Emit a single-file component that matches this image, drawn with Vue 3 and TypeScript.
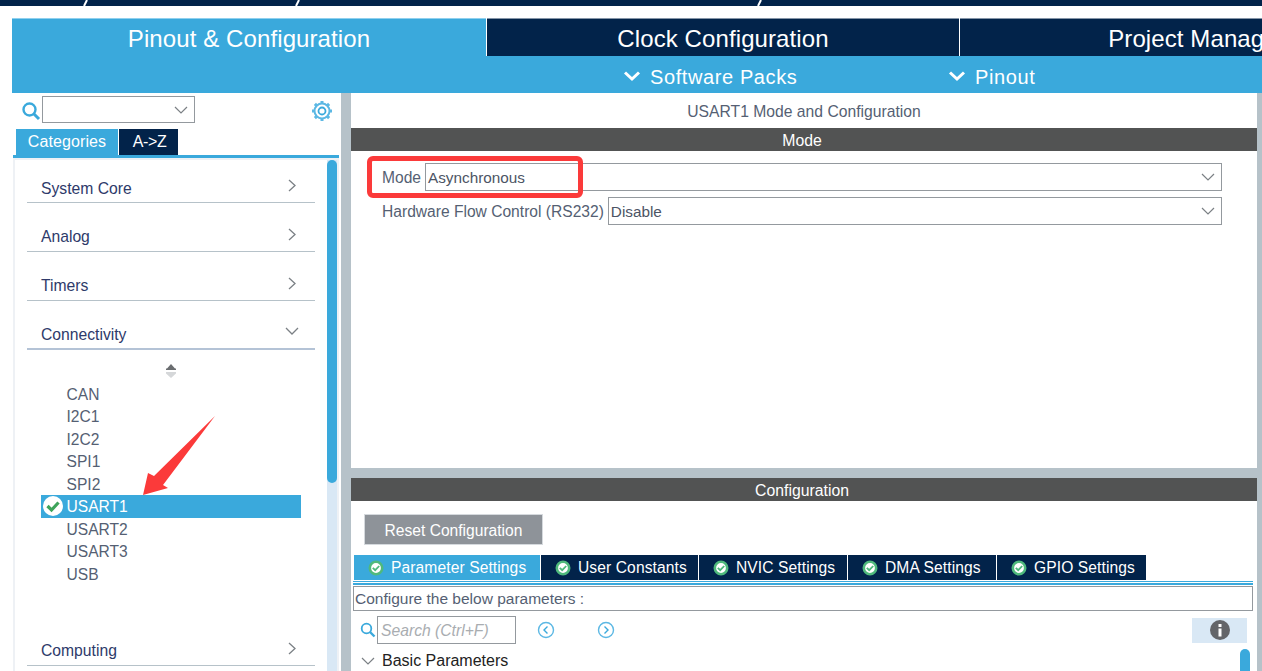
<template>
  <div class="app">
    <div class="strip">
      <svg width="1262" height="6" viewBox="0 0 1262 6">
        <path v-for="x in stripMarks" :key="x" :d="`M${x} 6L${x + 3} 0`" stroke="#fff" stroke-width="2" fill="none" />
      </svg>
    </div>

    <div class="main-tabs">
      <div v-for="(tab, i) in mainTabs" :key="tab" class="main-tab" :class="{ active: i === 0 }">{{ tab }}</div>
    </div>
    <div class="sub-menu">
      <div v-for="item in subMenu" :key="item" class="sub-item">
        <svg width="18" height="12" viewBox="0 0 18 12"><path d="M2 2.5L9 9L16 2.5" fill="none" stroke="#fff" stroke-width="3" /></svg>
        <span>{{ item }}</span>
      </div>
    </div>

    <div class="workspace">
      <aside class="left">
        <div class="search-row">
          <svg class="search-icon" width="20" height="20" viewBox="0 0 20 20">
            <circle cx="8.5" cy="8.5" r="6" fill="none" stroke="#3aa9dc" stroke-width="2.4" />
            <path d="M13 13L18 18" stroke="#3aa9dc" stroke-width="3" />
          </svg>
          <div class="combo">
            <svg width="14" height="8" viewBox="0 0 14 8"><path d="M1 1L7 7L13 1" fill="none" stroke="#7b8085" stroke-width="1.2" /></svg>
          </div>
          <svg class="gear" width="22" height="22" viewBox="0 0 22 22">
            <circle cx="11" cy="11" r="7.5" fill="none" stroke="#5cb8e4" stroke-width="2" />
            <circle cx="11" cy="11" r="3.5" fill="none" stroke="#3aa9dc" stroke-width="1.8" />
            <path
              d="M11 1V4M11 18V21M1 11H4M18 11H21M3.9 3.9L6 6M16 16L18.1 18.1M3.9 18.1L6 16M16 6L18.1 3.9"
              stroke="#5cb8e4"
              stroke-width="3"
            />
          </svg>
        </div>
        <div class="left-tabs">
          <div class="left-tab active">Categories</div>
          <div class="left-tab">A-&gt;Z</div>
        </div>
        <div class="list-panel">
          <div class="list">
            <div v-for="cat in categoriesTop" :key="cat.name" class="category">
              <span>{{ cat.name }}</span>
              <svg v-if="cat.open" class="cat-arrow open" width="14" height="9" viewBox="0 0 14 9"><path d="M1 1L7 7L13 1" fill="none" stroke="#7b8085" stroke-width="1.3" /></svg>
              <svg v-else class="cat-arrow" width="8" height="13" viewBox="0 0 8 13"><path d="M1 1L7 6.5L1 12" fill="none" stroke="#7b8085" stroke-width="1.3" /></svg>
            </div>
            <div class="sort-icon">
              <svg width="12" height="16" viewBox="0 0 12 16">
                <path d="M6 1L10 5.5H11V7H1V5.5H2Z" fill="#6a6d70" />
                <path d="M1 9H11V10.5L6 15L1 10.5Z" fill="#d5d7d9" />
              </svg>
            </div>
            <div class="peripherals">
              <div v-for="p in peripherals" :key="p" class="peripheral" :class="{ selected: p === selected }">
                <svg v-if="p === selected" class="ok-big" width="22" height="22" viewBox="0 0 22 22">
                  <circle cx="11" cy="11" r="10" fill="#fff" />
                  <path d="M5.5 11L9.5 15L16.5 7.5" fill="none" stroke="#3fa45b" stroke-width="3.2" />
                </svg>
                <span>{{ p }}</span>
              </div>
            </div>
            <div class="category computing">
              <span>Computing</span>
              <svg class="cat-arrow" width="8" height="13" viewBox="0 0 8 13"><path d="M1 1L7 6.5L1 12" fill="none" stroke="#7b8085" stroke-width="1.3" /></svg>
            </div>
          </div>
          <div class="list-scroll"><div class="list-thumb"></div></div>
        </div>
      </aside>

      <section class="right">
        <div class="mode-pane">
          <div class="pane-title">USART1 Mode and Configuration</div>
          <div class="band">Mode</div>
          <div class="form">
            <div class="form-row">
              <label>Mode</label>
              <div class="select">
                <span>Asynchronous</span>
                <svg width="14" height="8" viewBox="0 0 14 8"><path d="M1 1L7 7L13 1" fill="none" stroke="#7b8085" stroke-width="1.2" /></svg>
              </div>
            </div>
            <div class="form-row">
              <label>Hardware Flow Control (RS232)</label>
              <div class="select">
                <span>Disable</span>
                <svg width="14" height="8" viewBox="0 0 14 8"><path d="M1 1L7 7L13 1" fill="none" stroke="#7b8085" stroke-width="1.2" /></svg>
              </div>
            </div>
          </div>
        </div>
        <div class="divider"></div>
        <div class="config-pane">
          <div class="band">Configuration</div>
          <button class="reset">Reset Configuration</button>
          <div class="config-tabs">
            <div
              v-for="(tab, i) in configTabs"
              :key="tab.label"
              class="config-tab"
              :class="{ active: i === 0 }"
              :style="{ width: tab.width + 'px' }"
            >
              <svg width="16" height="16" viewBox="0 0 16 16">
                <circle cx="8" cy="8" r="6.2" fill="#fff" stroke="#4fb97c" stroke-width="2.6" />
                <path d="M4.8 7.8L7.2 10.2L11.2 6" fill="none" stroke="#4fb97c" stroke-width="1.8" />
              </svg>
              <span>{{ tab.label }}</span>
            </div>
          </div>
          <div class="tabs-rule"></div>
          <div class="describe">Configure the below parameters :</div>
          <div class="param-tools">
            <svg width="16" height="16" viewBox="0 0 16 16">
              <circle cx="6.5" cy="6.5" r="4.8" fill="none" stroke="#3aa9dc" stroke-width="1.8" />
              <path d="M10 10L14.5 14.5" stroke="#3aa9dc" stroke-width="2.4" />
            </svg>
            <div class="param-search">Search (Ctrl+F)</div>
            <svg class="nav first" width="18" height="18" viewBox="0 0 18 18">
              <circle cx="9" cy="9" r="7.5" fill="none" stroke="#5cb8e4" stroke-width="1.4" />
              <path d="M10.5 5.5L7 9L10.5 12.5" fill="none" stroke="#3aa9dc" stroke-width="1.4" />
            </svg>
            <svg class="nav" width="18" height="18" viewBox="0 0 18 18">
              <circle cx="9" cy="9" r="7.5" fill="none" stroke="#5cb8e4" stroke-width="1.4" />
              <path d="M7.5 5.5L11 9L7.5 12.5" fill="none" stroke="#3aa9dc" stroke-width="1.4" />
            </svg>
            <div class="info">
              <svg width="20" height="20" viewBox="0 0 20 20">
                <circle cx="10" cy="10" r="10" fill="#636569" />
                <rect x="8.5" y="8.5" width="3" height="8" fill="#fff" />
                <rect x="8.5" y="4" width="3" height="3" fill="#fff" />
              </svg>
            </div>
          </div>
          <div class="basic-row">
            <svg width="14" height="8" viewBox="0 0 14 8"><path d="M1 1L7 7L13 1" fill="none" stroke="#7b8085" stroke-width="1.2" /></svg>
            <span>Basic Parameters</span>
            <div class="basic-thumb"></div>
          </div>
        </div>
      </section>
      <div class="edge"></div>
    </div>

    <!-- annotations drawn over the screenshot -->
    <div class="red-box"></div>
    <svg class="red-arrow" width="80" height="85" viewBox="140 414 80 85">
      <polygon points="143,495 168,488 163,485 215,416 154,476 148,473" fill="#fb3a3a" />
    </svg>
  </div>
</template>

<script setup lang="ts">
interface Category {
  name: string
  open?: boolean
}

interface ConfigTab {
  label: string
  width: number
}

const stripMarks = [84, 296, 758]
const mainTabs = ['Pinout & Configuration', 'Clock Configuration', 'Project Manager']
const subMenu = ['Software Packs', 'Pinout']
const selected = 'USART1'

const categoriesTop: Category[] = [
  { name: 'System Core' },
  { name: 'Analog' },
  { name: 'Timers' },
  { name: 'Connectivity', open: true }
]

const peripherals = ['CAN', 'I2C1', 'I2C2', 'SPI1', 'SPI2', 'USART1', 'USART2', 'USART3', 'USB']

const configTabs: ConfigTab[] = [
  { label: 'Parameter Settings', width: 186 },
  { label: 'User Constants', width: 157 },
  { label: 'NVIC Settings', width: 148 },
  { label: 'DMA Settings', width: 148 },
  { label: 'GPIO Settings', width: 149 }
]
</script>

<style>
html,
body {
  margin: 0;
  background: #fff;
  overflow: hidden;
}
</style>

<style scoped>
.app {
  position: relative;
  width: 1262px;
  height: 671px;
  overflow: hidden;
  background: #fff;
  font-family: "Liberation Sans", Arial, sans-serif;
  display: flex;
  flex-direction: column;
}

.strip {
  height: 6px;
  background: #02234a;
  margin-bottom: 12px;
  flex: none;
}

.strip svg {
  display: block;
}

/* Perspective tabs */
.main-tabs {
  display: flex;
  gap: 1px;
  margin-left: 12px;
  height: 38px;
  flex: none;
}

.main-tab {
  flex: none;
  width: 474px;
  box-sizing: border-box;
  border-top: 1px solid #8595a8;
  background: #02234a;
  color: #fff;
  font-size: 24px;
  letter-spacing: 0.1px;
  line-height: 40px;
  text-align: center;
  white-space: nowrap;
}

.main-tab:nth-child(2) {
  width: 472px;
}

.main-tab.active {
  background: #3aa9dc;
  border-top-color: #8fd0ee;
}

.sub-menu {
  display: flex;
  margin-left: 12px;
  padding-left: 611px;
  height: 37px;
  background: #3aa9dc;
  flex: none;
}

.sub-item {
  width: 325px;
  flex: none;
  box-sizing: border-box;
  padding-top: 6px;
  display: flex;
  align-items: center;
  gap: 9px;
  color: #fff;
  font-size: 20px;
  letter-spacing: 0.6px;
}

.sub-item svg {
  margin-top: -3px;
}

.workspace {
  flex: 1;
  min-height: 0;
  display: flex;
  margin-left: 12px;
}

/* Left column */
.left {
  width: 329px;
  flex: none;
  display: flex;
  flex-direction: column;
}

.search-row {
  height: 36px;
  flex: none;
  box-sizing: border-box;
  display: flex;
  align-items: flex-start;
  padding-top: 3px;
}

.search-icon {
  margin: 5px 1px 0 9px;
  flex: none;
}

.combo {
  width: 153px;
  height: 27px;
  box-sizing: border-box;
  border: 1px solid #94999e;
  display: flex;
  align-items: center;
  justify-content: flex-end;
  padding-right: 6px;
}

.gear {
  margin: 4px 0 0 116px;
}

.left-tabs {
  display: flex;
  gap: 1px;
  padding-left: 4px;
  height: 26px;
  flex: none;
}

.left-tab {
  width: 59px;
  background: #02234a;
  color: #fff;
  font-size: 16px;
  letter-spacing: -0.4px;
  line-height: 26px;
  text-align: center;
  padding-left: 2px;
  box-sizing: border-box;
}

.left-tab.active {
  width: 102px;
  background: #3aa9dc;
  letter-spacing: 0.1px;
  padding-left: 0;
}

.list-panel {
  flex: 1;
  min-height: 0;
  display: flex;
  border-top: 3px solid #3aa9dc;
  margin: 0 2px 0 1px;
  background: #eef1f5;
  padding: 2px 2px 0 2px;
}

.list {
  flex: 1;
  background: #fff;
  padding: 0 12px;
  min-width: 0;
  display: flex;
  flex-direction: column;
}

.category {
  height: 49px;
  flex: none;
  box-sizing: border-box;
  border-bottom: 1px solid #b6c2c9;
  padding: 0 14px;
  display: flex;
  align-items: flex-end;
  justify-content: space-between;
  color: #2e3a6a;
  font-size: 15.7px;
  line-height: 20px;
}

.category span {
  padding-bottom: 4px;
}

.category:first-child {
  height: 43px;
}

.category:first-child span {
  padding-bottom: 3px;
}

.category:nth-child(4) {
  border-bottom: 2px solid #b4c3d6;
}

.category:nth-child(4) span {
  padding-bottom: 3px;
}

.cat-arrow {
  margin: 0 5px 10px 0;
}

.cat-arrow.open {
  margin: 0 2px 12px 0;
}

.sort-icon {
  height: 32.5px;
  flex: none;
  display: flex;
  justify-content: center;
  align-items: flex-end;
  box-sizing: border-box;
  padding-bottom: 3.5px;
}

.peripherals {
  display: grid;
  grid-auto-rows: 22.5px;
  padding-left: 14px;
  width: 260px;
  flex: none;
}

.peripheral {
  position: relative;
  padding-left: 25.5px;
  color: #555f73;
  font-size: 15.6px;
  line-height: 23px;
}

.peripheral.selected {
  background: #3aa9dc;
  color: #fff;
}

.ok-big {
  position: absolute;
  left: 1px;
  top: 0;
}

.computing {
  margin-top: 32px;
}

.list-scroll {
  width: 10px;
  flex: none;
  background: #d9e8f5;
}

.list-thumb {
  height: 323px;
  background: #3aa9dc;
  border-radius: 5px;
}

/* Right column */
.right {
  flex: none;
  width: 906px;
  display: flex;
  flex-direction: column;
  border-left: 10px solid #b6c2c9;
}

.pane-title {
  height: 35px;
  text-align: center;
  color: #555f73;
  font-size: 15.7px;
  line-height: 37px;
}

.band {
  height: 23px;
  background: #525353;
  color: #fff;
  text-align: center;
  font-size: 15.8px;
  line-height: 25px;
  padding-right: 4px;
}

.mode-pane {
  height: 375px;
  flex: none;
}

.form {
  padding: 12px 35px 0 31px;
  display: flex;
  flex-direction: column;
  gap: 6px;
}

.form-row {
  display: flex;
  align-items: center;
  gap: 4px;
  color: #555f73;
  font-size: 15.6px;
}

.form-row label {
  white-space: nowrap;
  padding-top: 2px;
}

.select {
  flex: 1;
  height: 28px;
  box-sizing: border-box;
  border: 1px solid #94999e;
  display: flex;
  align-items: center;
  justify-content: space-between;
  padding: 0 6px 0 2px;
  color: #4c5464;
  font-size: 15.3px;
}

.select span {
  padding-top: 2px;
}

.divider {
  height: 10px;
  flex: none;
  background: #b6c2c9;
}

.config-pane {
  flex: 1;
  min-height: 0;
  overflow: hidden;
  display: flex;
  flex-direction: column;
}

.reset {
  align-self: flex-start;
  width: 179px;
  height: 34px;
  margin: 13px 0 10px 13px;
  padding: 2px 0 0;
  border: 1px solid #d5d9dd;
  background: #8e9399;
  color: #fff;
  font: 15.6px "Liberation Sans", Arial, sans-serif;
}

.config-tabs {
  display: flex;
  gap: 1px;
  padding-left: 3px;
  height: 25px;
  flex: none;
}

.config-tab {
  flex: none;
  box-sizing: border-box;
  background: #02234a;
  color: #fff;
  font-size: 15.6px;
  display: flex;
  align-items: center;
  gap: 7px;
  padding-left: 14px;
  letter-spacing: 0.1px;
}

.config-tab.active {
  background: #3aa9dc;
}

.tabs-rule {
  height: 4px;
  flex: none;
  box-sizing: border-box;
  margin: 1px 4px 0 2px;
  border-top: 1px solid #3aa9dc;
  border-bottom: 2px solid #3aa9dc;
}

.describe {
  height: 25px;
  flex: none;
  box-sizing: border-box;
  margin: 1px 4px 0 2px;
  border: 1px solid #94999e;
  color: #555f73;
  font-size: 15.5px;
  line-height: 24px;
  padding-left: 1px;
}

.param-tools {
  height: 28px;
  flex: none;
  margin-top: 5px;
  padding-left: 9px;
  display: flex;
  align-items: center;
  position: relative;
}

.param-search {
  width: 139px;
  height: 28px;
  box-sizing: border-box;
  border: 1px solid #94999e;
  color: #a9adb1;
  font-size: 15.7px;
  font-style: italic;
  line-height: 27px;
  padding-left: 3px;
  margin-left: 1px;
}

.nav {
  margin-left: 42px;
}

.nav.first {
  margin-left: 21px;
}

.info {
  margin-left: auto;
  margin-right: 10px;
  width: 55px;
  height: 25px;
  background: #d9e8f5;
  display: flex;
  align-items: center;
  justify-content: center;
}

.basic-row {
  position: relative;
  display: flex;
  align-items: center;
  gap: 7px;
  padding-left: 10px;
  height: 20px;
  margin-top: 7px;
  color: #222;
  font-size: 16px;
  flex: none;
}

.basic-thumb {
  position: absolute;
  right: 7px;
  top: -2px;
  width: 10px;
  height: 40px;
  background: #3aa9dc;
  border-radius: 5px;
}

.edge {
  width: 5px;
  flex: none;
  background: #b6c2c9;
}

/* Red markup on top of the UI */
.red-box {
  position: absolute;
  left: 367px;
  top: 156px;
  width: 216px;
  height: 42px;
  box-sizing: border-box;
  border: 5px solid #fb3a3a;
  border-radius: 6px;
}

.red-arrow {
  position: absolute;
  left: 140px;
  top: 414px;
}
</style>
